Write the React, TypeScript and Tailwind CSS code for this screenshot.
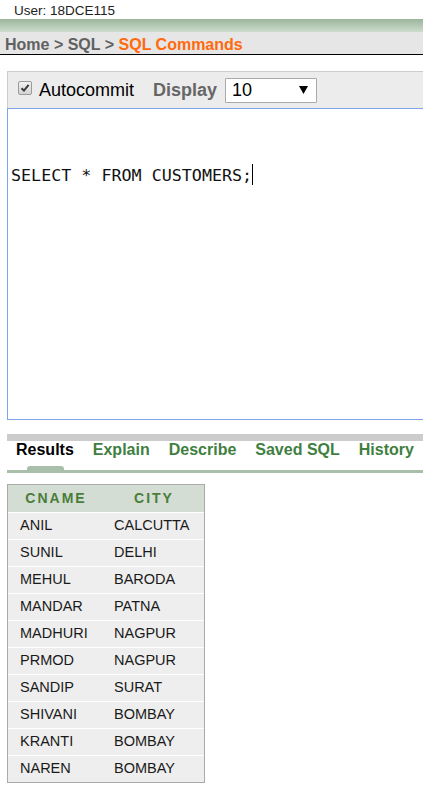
import React from 'react';

const rows: [string, string][] = [
  ['ANIL', 'CALCUTTA'],
  ['SUNIL', 'DELHI'],
  ['MEHUL', 'BARODA'],
  ['MANDAR', 'PATNA'],
  ['MADHURI', 'NAGPUR'],
  ['PRMOD', 'NAGPUR'],
  ['SANDIP', 'SURAT'],
  ['SHIVANI', 'BOMBAY'],
  ['KRANTI', 'BOMBAY'],
  ['NAREN', 'BOMBAY'],
];

const tabs = ['Results', 'Explain', 'Describe', 'Saved SQL', 'History'];

function CheckBox() {
  return (
    <span className="inline-flex items-center justify-center w-[14px] h-[14px] rounded-[2px] border border-[#9a9a9a] bg-gradient-to-b from-[#f2f2f2] to-[#d4d4d4]">
      <svg width="10" height="10" viewBox="0 0 10 10">
        <path d="M1.5 5.2 L4 7.6 L8.6 1.8" fill="none" stroke="#3a3a3a" strokeWidth="2" />
      </svg>
    </span>
  );
}

export default function App() {
  return (
    <div className="w-[423px] h-[790px] overflow-hidden bg-white font-['Liberation_Sans',Arial,sans-serif]">
      {/* user line */}
      <div className="h-[19px] pl-[14px] pt-[2px] text-[13.5px] leading-[17px] text-[#222]">User: 18DCE115</div>

      {/* top green band + breadcrumb */}
      <div className="h-[13px] bg-gradient-to-b from-[#9bb59b] to-[#cddccd]" />
      <div className="h-[23px] bg-[#e6e6e6] border-b border-black pl-[5px] pt-[3px] text-[16px] leading-[20px] font-bold text-[#616161]">
        Home &gt; SQL &gt; <span className="text-[#ff6a0d]">SQL Commands</span>
      </div>

      <div className="ml-[7px] mt-[16px]">
        {/* toolbar */}
        <div className="h-[37px] bg-[#ececec] border-t border-l border-[#cccccc] flex items-center pl-[10px]">
          <span className="-mt-[4px]">
            <CheckBox />
          </span>
          <span className="ml-[7px] text-[18px] text-black">Autocommit</span>
          <span className="ml-[19px] text-[18px] font-bold text-[#666]">Display</span>
          <div className="ml-[8px] w-[92px] h-[25px] bg-white border border-[#aaaaaa] rounded-[1px] flex items-center pl-[6px] pr-[8px]">
            <span className="text-[18px] leading-[20px] text-black">10</span>
            <svg className="ml-auto" width="9" height="8" viewBox="0 0 9 8">
              <path d="M0 0 H9 L4.5 8 Z" fill="#000" />
            </svg>
          </div>
        </div>

        {/* sql editor */}
        <div className="h-[312px] bg-white border border-r-0 border-[#7ba5e8] pl-[3px] pt-[55px]">
          <div className="font-['DejaVu_Sans_Mono',monospace] text-[16.7px] leading-[20px] text-[#111] whitespace-pre">
            SELECT * FROM CUSTOMERS;<span className="inline-block w-[1px] h-[21px] bg-black align-[-4px]" />
          </div>
        </div>

        {/* tabs */}
        <div className="mt-[14px] h-[7px] bg-[#cccccc]" />
        <div className="h-[25px] flex gap-[19px] pl-[9px] text-[16px] leading-[18px] font-bold">
          {tabs.map((t, i) => (
            <span key={t} className={i === 0 ? 'text-black' : 'text-[#3f7f3f]'}>{t}</span>
          ))}
        </div>
        <div className="h-[4px]">
          <div className="ml-[20px] w-[37px] h-[4px] rounded-t-[3px] bg-[#a9bfa9]" />
        </div>
        <div className="h-[3px] bg-[#a9bfa9]" />

        {/* results table */}
        <div className="mt-[11px] w-[198px] border border-[#aaaaaa] text-[14.5px]">
          <div className="h-[27px] flex items-center bg-[#d3ddd3] text-[14px] font-bold tracking-[2px] text-[#4a7d3a]">
            <div className="w-[94px] text-center pl-[2px]">CNAME</div>
            <div className="flex-1 text-center pl-[2px]">CITY</div>
          </div>
          {rows.map(([n, c]) => (
            <div key={n} className="h-[27px] flex items-center bg-[#eeeeee] border-t border-white text-[#1a1a1a]">
              <div className="w-[94px] pl-[12px]">{n}</div>
              <div className="flex-1 pl-[12px]">{c}</div>
            </div>
          ))}
        </div>
      </div>
    </div>
  );
}
